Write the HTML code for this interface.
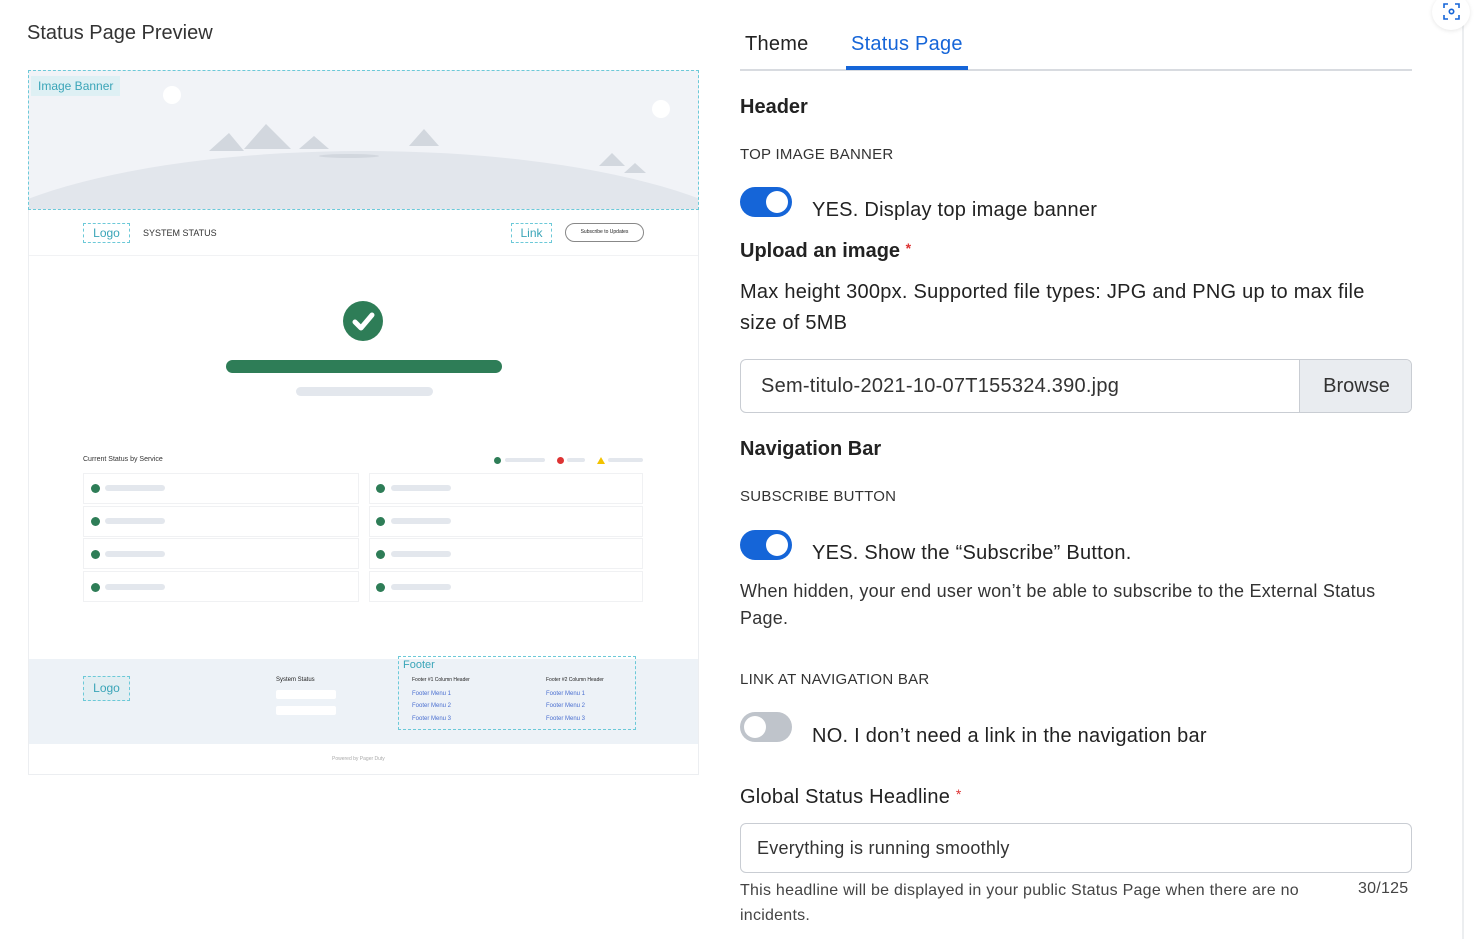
<!DOCTYPE html>
<html><head><meta charset="utf-8"><style>
*{box-sizing:border-box;margin:0;padding:0}
body{width:1474px;height:939px;background:#fff;font-family:"Liberation Sans",sans-serif;color:#222;position:relative;overflow:hidden}
.a{position:absolute}
.dash{border:1px dashed #6cc9d8}
.tog{width:52px;height:30px;border-radius:15px;background:#1565d8;position:absolute}
.tog::after{content:"";position:absolute;right:4px;top:4px;width:22px;height:22px;border-radius:50%;background:#fff}
.tog.off{background:#bfc4cb}
.tog.off::after{left:4px;right:auto}
.t{position:absolute;white-space:nowrap}
.r{letter-spacing:0.25px}
.bar{position:absolute;height:6px;border-radius:3px;background:#e3e7ed}
.chk{position:absolute;width:9px;height:9px;border-radius:50%;background:#2e7d57}
.row{position:absolute;height:31px;border:1px solid #f0f1f3;background:#fff}
.fl{color:#4a6fd0;font-size:6px}
</style></head><body>
<div class="t" style="left:27px;top:22px;font-size:20px;color:#333">Status Page Preview</div>

<!-- preview -->
<div class="a" style="left:28px;top:70px;width:671px;height:705px;border:1px solid #eceef1;background:#fff"></div>
<div class="a dash" style="left:28px;top:70px;width:671px;height:140px;background:#f1f3f7;overflow:hidden">
 <svg width="671" height="140" style="position:absolute;left:0;top:0">
  <ellipse cx="335" cy="200" rx="420" ry="120" fill="#e2e6ec"/>
  <polygon points="180,80 200,62 215,80" fill="#d2d7de"/><polygon points="215,78 237,53 262,78" fill="#d2d7de"/>
  <polygon points="270,78 285,65 300,78" fill="#d2d7de"/><polygon points="380,75 395,58 410,75" fill="#d2d7de"/>
  <polygon points="570,95 583,82 596,95" fill="#d2d7de"/><polygon points="595,102 606,92 617,102" fill="#d2d7de"/>
  <ellipse cx="320" cy="85" rx="30" ry="2" fill="#d2d7de"/>
  <circle cx="143" cy="24" r="9" fill="#fff"/><circle cx="632" cy="38" r="9" fill="#fff"/>
 </svg>
 <div class="t" style="left:2px;top:5px;background:#def0f4;color:#3aa5b8;font-size:12px;padding:3px 7px">Image Banner</div>
</div>
<div class="a" style="left:29px;top:255px;width:669px;border-top:1px solid #f1f2f4"></div>
<div class="t dash" style="left:83px;top:223px;width:47px;height:20px;font-size:12px;color:#3aa5b8;text-align:center;line-height:18px">Logo</div>
<div class="t" style="left:143px;top:228px;font-size:9px;color:#333">SYSTEM STATUS</div>
<div class="t dash" style="left:511px;top:223px;width:41px;height:20px;font-size:12px;color:#3aa5b8;text-align:center;line-height:18px">Link</div>
<div class="t" style="left:565px;top:223px;width:79px;height:19px;border:1px solid #888;border-radius:10px;font-size:5px;text-align:center;line-height:17px">Subscribe to Updates</div>
<div class="a" style="left:343px;top:301px;width:40px;height:40px;border-radius:50%;background:#2e7d57"></div>
<svg class="a" style="left:343px;top:301px" width="40" height="40"><path d="M12 21 L18 27 L29 14" stroke="#fff" stroke-width="5" fill="none" stroke-linecap="round" stroke-linejoin="round"/></svg>
<div class="a" style="left:226px;top:360px;width:276px;height:13px;border-radius:7px;background:#2e7d57"></div>
<div class="bar" style="left:296px;top:387px;width:137px;height:9px;border-radius:5px"></div>
<div class="t" style="left:83px;top:456px;font-size:7px;color:#333">Current Status by Service</div>
<div class="chk" style="left:494px;top:457px;width:7px;height:7px"></div><div class="bar" style="left:505px;top:458px;width:40px;height:4px"></div>
<div class="chk" style="left:557px;top:457px;width:7px;height:7px;background:#d33"></div><div class="bar" style="left:567px;top:458px;width:18px;height:4px"></div>
<div class="a" style="left:597px;top:457px;width:0;height:0;border-left:4px solid transparent;border-right:4px solid transparent;border-bottom:7px solid #f2c200"></div><div class="bar" style="left:608px;top:458px;width:35px;height:4px"></div>
<div class="row" style="left:83px;top:473px;width:276px"></div><div class="row" style="left:83px;top:506px;width:276px"></div><div class="row" style="left:83px;top:538px;width:276px"></div><div class="row" style="left:83px;top:571px;width:276px"></div>
<div class="row" style="left:369px;top:473px;width:274px"></div><div class="row" style="left:369px;top:506px;width:274px"></div><div class="row" style="left:369px;top:538px;width:274px"></div><div class="row" style="left:369px;top:571px;width:274px"></div>
<div class="chk" style="left:91px;top:484px"></div><div class="bar" style="left:105px;top:485px;width:60px"></div>
<div class="chk" style="left:91px;top:517px"></div><div class="bar" style="left:105px;top:518px;width:60px"></div>
<div class="chk" style="left:91px;top:550px"></div><div class="bar" style="left:105px;top:551px;width:60px"></div>
<div class="chk" style="left:91px;top:583px"></div><div class="bar" style="left:105px;top:584px;width:60px"></div>
<div class="chk" style="left:376px;top:484px"></div><div class="bar" style="left:391px;top:485px;width:60px"></div>
<div class="chk" style="left:376px;top:517px"></div><div class="bar" style="left:391px;top:518px;width:60px"></div>
<div class="chk" style="left:376px;top:550px"></div><div class="bar" style="left:391px;top:551px;width:60px"></div>
<div class="chk" style="left:376px;top:583px"></div><div class="bar" style="left:391px;top:584px;width:60px"></div>
<div class="a" style="left:29px;top:659px;width:669px;height:85px;background:#edf2f7"></div>
<div class="t dash" style="left:83px;top:676px;width:47px;height:25px;font-size:12px;color:#3aa5b8;text-align:center;line-height:23px;background:#e2eef2">Logo</div>
<div class="t" style="left:276px;top:677px;font-size:6px">System Status</div>
<div class="a" style="left:276px;top:690px;width:60px;height:9px;background:#fff;border-radius:2px"></div>
<div class="a" style="left:276px;top:706px;width:60px;height:9px;background:#fff;border-radius:2px"></div>
<div class="a dash" style="left:398px;top:656px;width:238px;height:74px"></div>
<div class="t" style="left:403px;top:659px;font-size:11px;color:#3aa5b8">Footer</div>
<div class="t" style="left:412px;top:677px;font-size:5px">Footer #1 Column Header</div>
<div class="t" style="left:546px;top:677px;font-size:5px">Footer #2 Column Header</div>
<div class="t fl" style="left:412px;top:691px">Footer Menu 1</div><div class="t fl" style="left:412px;top:703px">Footer Menu 2</div><div class="t fl" style="left:412px;top:716px">Footer Menu 3</div>
<div class="t fl" style="left:546px;top:691px">Footer Menu 1</div><div class="t fl" style="left:546px;top:703px">Footer Menu 2</div><div class="t fl" style="left:546px;top:716px">Footer Menu 3</div>
<div class="t" style="left:332px;top:756px;font-size:5px;color:#aaa">Powered by Pager Duty</div>

<!-- right -->
<div class="t r" style="left:745px;top:33px;font-size:20px;color:#222">Theme</div>
<div class="t r" style="left:851px;top:33px;font-size:20px;color:#1565d8">Status Page</div>
<div class="a" style="left:740px;top:69px;width:672px;height:2px;background:#d8dbe0"></div>
<div class="a" style="left:846px;top:66px;width:122px;height:4px;background:#1565d8"></div>
<div class="t" style="left:740px;top:96px;font-size:20px;font-weight:bold;color:#222">Header</div>
<div class="t r" style="left:740px;top:146px;font-size:15px;color:#333">TOP IMAGE BANNER</div>
<div class="tog" style="left:740px;top:187px"></div>
<div class="t r" style="left:812px;top:199px;font-size:20px">YES. Display top image banner</div>
<div class="t" style="left:740px;top:240px;font-size:20px;font-weight:bold">Upload an image <span style="color:#d33;font-size:14px;vertical-align:top">*</span></div>
<div class="t r" style="left:740px;top:277px;font-size:20px;line-height:31px;white-space:normal;width:645px">Max height 300px. Supported file types: JPG and PNG up to max file size of 5MB</div>
<div class="a" style="left:740px;top:359px;width:672px;height:54px;border:1px solid #c9cdd3;border-radius:6px;overflow:hidden">
 <div class="t r" style="left:20px;top:15px;font-size:20px;color:#333">Sem-titulo-2021-10-07T155324.390.jpg</div>
 <div class="a" style="left:558px;top:0;width:114px;height:54px;background:#e9ecf0;border-left:1px solid #c9cdd3;font-size:20px;text-align:center;line-height:52px;color:#333">Browse</div>
</div>
<div class="t" style="left:740px;top:438px;font-size:20px;font-weight:bold">Navigation Bar</div>
<div class="t r" style="left:740px;top:488px;font-size:15px;color:#333">SUBSCRIBE BUTTON</div>
<div class="tog" style="left:740px;top:530px"></div>
<div class="t r" style="left:812px;top:542px;font-size:20px">YES. Show the “Subscribe” Button.</div>
<div class="t r" style="left:740px;top:578px;font-size:18px;line-height:27px;white-space:normal;width:650px;color:#333">When hidden, your end user won’t be able to subscribe to the External Status Page.</div>
<div class="t r" style="left:740px;top:671px;font-size:15px;color:#333">LINK AT NAVIGATION BAR</div>
<div class="tog off" style="left:740px;top:712px"></div>
<div class="t r" style="left:812px;top:725px;font-size:20px">NO. I don’t need a link in the navigation bar</div>
<div class="t r" style="left:740px;top:786px;font-size:20px">Global Status Headline <span style="color:#d33;font-size:14px;vertical-align:top">*</span></div>
<div class="a" style="left:740px;top:823px;width:672px;height:50px;border:1px solid #c9cdd3;border-radius:6px"></div>
<div class="t r" style="left:757px;top:838px;font-size:18px;color:#333">Everything is running smoothly</div>
<div class="t r" style="left:740px;top:878px;font-size:16px;line-height:25px;white-space:normal;width:600px;color:#444">This headline will be displayed in your public Status Page when there are no incidents.</div>
<div class="t r" style="left:1358px;top:880px;font-size:16px;color:#444">30/125</div>

<div class="a" style="left:1462px;top:0;width:2px;height:939px;background:#eceef0"></div>
<div class="a" style="left:1432px;top:-6px;width:38px;height:36px;border-radius:50%;background:#fff;box-shadow:0 1px 4px rgba(0,0,0,.1)"></div>
<svg class="a" style="left:1443px;top:3px" width="17" height="17" fill="none" stroke="#1565d8" stroke-width="1.6"><path d="M1 5V1H5M12 1H16V5M16 12V16H12M5 16H1V12"/><circle cx="8.5" cy="8.5" r="2.2"/></svg>
</body></html>
